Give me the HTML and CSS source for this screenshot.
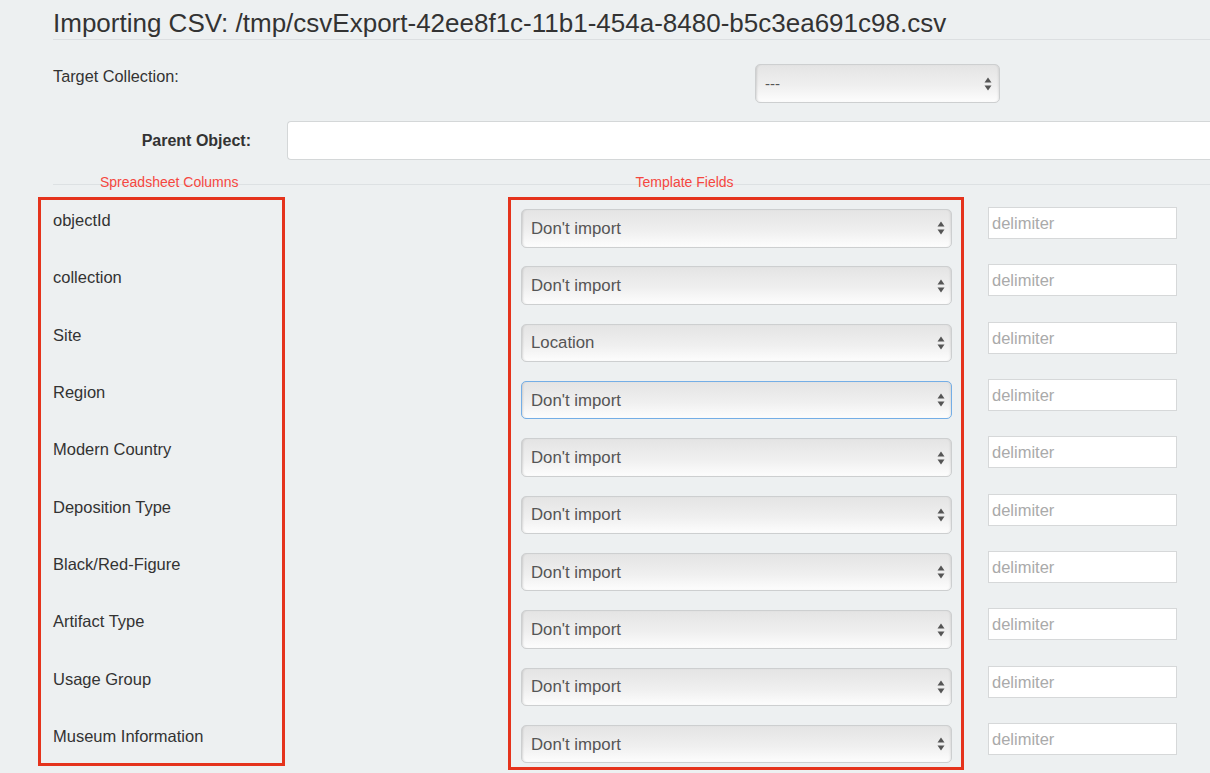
FILE: index.html
```html
<!DOCTYPE html>
<html lang="en">
<head>
<meta charset="utf-8">
<title>Importing CSV</title>
<link rel="stylesheet" href="styles.css">
</head>
<body>
<div class="page">
  <h1 class="title">Importing CSV: /tmp/csvExport-42ee8f1c-11b1-454a-8480-b5c3ea691c98.csv</h1>

  <div class="target-row">
    <label class="target-label">Target Collection:</label>
    <div class="select-wrap target-select">
      <select class="select"><option>---</option></select>
      <svg class="arrows" viewBox="0 0 8 14" width="8" height="14"><path d="M0.5 5.5 L4 0.5 L7.5 5.5Z"/><path d="M0.5 8.5 L7.5 8.5 L4 13.5Z"/></svg>
    </div>
  </div>

  <div class="parent-row">
    <label class="parent-label">Parent Object:</label>
    <input class="parent-input" type="text">
  </div>

  <div class="col-heads">
    <span class="head head-left">Spreadsheet Columns</span>
    <span class="head head-mid">Template Fields</span>
  </div>

  <div class="mapping">
    <div class="box names">
      <div class="name">objectId</div>
      <div class="name">collection</div>
      <div class="name">Site</div>
      <div class="name">Region</div>
      <div class="name">Modern Country</div>
      <div class="name">Deposition Type</div>
      <div class="name">Black/Red-Figure</div>
      <div class="name">Artifact Type</div>
      <div class="name">Usage Group</div>
      <div class="name">Museum Information</div>
    </div>

    <div class="box fields">
      <div class="select-wrap"><select class="select"><option>Don't import</option></select><svg class="arrows" viewBox="0 0 8 14" width="8" height="14"><path d="M0.5 5.5 L4 0.5 L7.5 5.5Z"/><path d="M0.5 8.5 L7.5 8.5 L4 13.5Z"/></svg></div>
      <div class="select-wrap"><select class="select"><option>Don't import</option></select><svg class="arrows" viewBox="0 0 8 14" width="8" height="14"><path d="M0.5 5.5 L4 0.5 L7.5 5.5Z"/><path d="M0.5 8.5 L7.5 8.5 L4 13.5Z"/></svg></div>
      <div class="select-wrap"><select class="select"><option>Location</option></select><svg class="arrows" viewBox="0 0 8 14" width="8" height="14"><path d="M0.5 5.5 L4 0.5 L7.5 5.5Z"/><path d="M0.5 8.5 L7.5 8.5 L4 13.5Z"/></svg></div>
      <div class="select-wrap"><select class="select focused"><option>Don't import</option></select><svg class="arrows" viewBox="0 0 8 14" width="8" height="14"><path d="M0.5 5.5 L4 0.5 L7.5 5.5Z"/><path d="M0.5 8.5 L7.5 8.5 L4 13.5Z"/></svg></div>
      <div class="select-wrap"><select class="select"><option>Don't import</option></select><svg class="arrows" viewBox="0 0 8 14" width="8" height="14"><path d="M0.5 5.5 L4 0.5 L7.5 5.5Z"/><path d="M0.5 8.5 L7.5 8.5 L4 13.5Z"/></svg></div>
      <div class="select-wrap"><select class="select"><option>Don't import</option></select><svg class="arrows" viewBox="0 0 8 14" width="8" height="14"><path d="M0.5 5.5 L4 0.5 L7.5 5.5Z"/><path d="M0.5 8.5 L7.5 8.5 L4 13.5Z"/></svg></div>
      <div class="select-wrap"><select class="select"><option>Don't import</option></select><svg class="arrows" viewBox="0 0 8 14" width="8" height="14"><path d="M0.5 5.5 L4 0.5 L7.5 5.5Z"/><path d="M0.5 8.5 L7.5 8.5 L4 13.5Z"/></svg></div>
      <div class="select-wrap"><select class="select"><option>Don't import</option></select><svg class="arrows" viewBox="0 0 8 14" width="8" height="14"><path d="M0.5 5.5 L4 0.5 L7.5 5.5Z"/><path d="M0.5 8.5 L7.5 8.5 L4 13.5Z"/></svg></div>
      <div class="select-wrap"><select class="select"><option>Don't import</option></select><svg class="arrows" viewBox="0 0 8 14" width="8" height="14"><path d="M0.5 5.5 L4 0.5 L7.5 5.5Z"/><path d="M0.5 8.5 L7.5 8.5 L4 13.5Z"/></svg></div>
      <div class="select-wrap"><select class="select"><option>Don't import</option></select><svg class="arrows" viewBox="0 0 8 14" width="8" height="14"><path d="M0.5 5.5 L4 0.5 L7.5 5.5Z"/><path d="M0.5 8.5 L7.5 8.5 L4 13.5Z"/></svg></div>
    </div>

    <div class="delims">
      <input class="delim" type="text" placeholder="delimiter">
      <input class="delim" type="text" placeholder="delimiter">
      <input class="delim" type="text" placeholder="delimiter">
      <input class="delim" type="text" placeholder="delimiter">
      <input class="delim" type="text" placeholder="delimiter">
      <input class="delim" type="text" placeholder="delimiter">
      <input class="delim" type="text" placeholder="delimiter">
      <input class="delim" type="text" placeholder="delimiter">
      <input class="delim" type="text" placeholder="delimiter">
      <input class="delim" type="text" placeholder="delimiter">
    </div>
  </div>
</div>
</body>
</html>
```

FILE: styles.css
```css
html, body {
  margin: 0;
  padding: 0;
  overflow: hidden;
}
body {
  background: #edf0f1;
  font-family: "Liberation Sans", Arial, Helvetica, sans-serif;
  color: #333;
  width: 1210px;
  height: 773px;
}
.page {
  width: 1210px;
}
.title {
  margin: 8px 0 0 53px;
  font-size: 26px;
  line-height: 30px;
  font-weight: normal;
  color: #333;
  white-space: nowrap;
  padding-bottom: 1px;
  border-bottom: 1px solid #dcdfe1;
}
.target-row {
  display: flex;
  align-items: flex-start;
  margin-top: 24px;
  padding-left: 53px;
}
.target-label {
  flex: none;
  width: 702px;
  font-size: 16.3px;
  line-height: 20px;
  padding-top: 2px;
}
.select-wrap {
  position: relative;
}
.target-select {
  flex: none;
  width: 245px;
  height: 39px;
}
.select {
  -webkit-appearance: none;
  appearance: none;
  display: block;
  width: 100%;
  height: 100%;
  box-sizing: border-box;
  margin: 0;
  border: 1px solid #cdcfd0;
  border-radius: 5px;
  background: linear-gradient(#e4e4e4, #efefef 55%, #fdfdfd);
  box-shadow: inset 2px 0 2px -1px rgba(0,0,0,0.12), inset -2px 0 2px -1px rgba(0,0,0,0.08);
  font-family: "Liberation Sans", Arial, Helvetica, sans-serif;
  font-size: 16.8px;
  color: #555;
  padding: 0 24px 0 9px;
  outline: none;
}
.target-select .select {
  font-size: 15px;
}
.select.focused {
  border-color: #74aee6;
}
.arrows {
  position: absolute;
  right: 7px;
  top: 50%;
  transform: translateY(-50%);
  fill: #555;
  pointer-events: none;
}
.target-select .arrows {
  right: 8px;
}
.parent-row {
  display: flex;
  align-items: center;
  margin-top: 18px;
  padding-left: 53px;
}
.parent-label {
  flex: none;
  width: 198px;
  margin-right: 36px;
  text-align: right;
  font-weight: bold;
  font-size: 16px;
  line-height: 20px;
}
.parent-input {
  flex: none;
  width: 923px;
  height: 39px;
  box-sizing: border-box;
  border: 1px solid #d4d7d8;
  border-right: none;
  border-radius: 4px 0 0 4px;
  background: #fff;
  margin: 0;
}
.col-heads {
  display: flex;
  margin-top: 14px;
  height: 16px;
  padding-left: 100px;
  background: linear-gradient(#dde1e3, #dde1e3) no-repeat 53px 10px / 1157px 1px;
}
.head {
  font-size: 14px;
  line-height: 16px;
  color: #f5473f;
  white-space: nowrap;
}
.head-mid {
  margin-left: 397px;
}
.mapping {
  display: flex;
  align-items: flex-start;
  margin-top: 7px;
  padding-left: 38px;
}
.box {
  flex: none;
  box-sizing: border-box;
  border: 3px solid #e5331c;
  display: flex;
  flex-direction: column;
}
.names {
  width: 247px;
  padding: 10px 0 17px 12px;
  gap: 37.33px;
  margin-right: 223px;
}
.name {
  font-size: 16.5px;
  line-height: 20px;
  color: #333;
  white-space: nowrap;
}
.fields {
  width: 456px;
  padding: 9px 9px 4px 10px;
  gap: 18.83px;
  margin-right: 24px;
}
.fields .select-wrap {
  height: 38.5px;
}
.delims {
  flex: none;
  display: flex;
  flex-direction: column;
  gap: 25.33px;
  padding-top: 10px;
}
.delim {
  width: 189px;
  height: 32px;
  box-sizing: border-box;
  margin: 0;
  border: 1px solid #d6d8d9;
  border-radius: 0;
  background: #fff;
  font-family: "Liberation Sans", Arial, Helvetica, sans-serif;
  font-size: 16.5px;
  padding: 1px 3px 0;
  color: #333;
  outline: none;
}
.delim::placeholder {
  color: #aaa;
}
```
